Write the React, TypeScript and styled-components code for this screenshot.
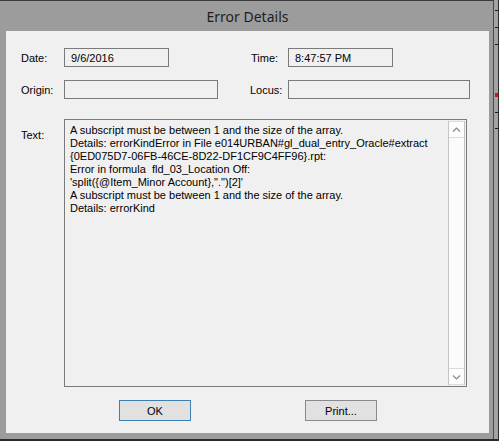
import React from "react";
import styled, { createGlobalStyle } from "styled-components";

const Global = createGlobalStyle`
  html, body { margin: 0; padding: 0; background: #2b2b2b; }
  body { font-family: "Liberation Sans", Arial, sans-serif; }
`;

const Desktop = styled.div`
  width: 499px;
  height: 441px;
  display: flex;
  background: #2b2b2b;
  overflow: hidden;
`;

const Window = styled.div`
  width: 494px;
  height: 439px;
  box-sizing: border-box;
  border-top: 1px solid #3a3a3a;
  border-right: 1px solid #4a4a4a;
  background: #9c9c9c;
  padding: 0 4px 6px 6px;
  display: flex;
  flex-direction: column;
`;

const SideStrip = styled.div`
  width: 4px;
  height: 439px;
  background: #a3a3a3;
  position: relative;
`;

const Tick = styled.div<{ $top: number; $red?: boolean }>`
  position: absolute;
  right: 0;
  top: ${(p) => p.$top}px;
  width: 3px;
  height: ${(p) => (p.$red ? 4 : 1)}px;
  background: ${(p) => (p.$red ? "#e01010" : "#1a1a1a")};
`;

const TitleBar = styled.div`
  height: 30px;
  display: flex;
  align-items: center;
  justify-content: center;
  font-family: "Noto Sans", "Open Sans", sans-serif;
  font-size: 14px;
  color: #1e1e1e;
  padding-top: 1px;
  box-sizing: border-box;
`;

const Client = styled.div`
  flex: 1;
  background: #f0f0f0;
  padding: 17px 0 0 15px;
  display: flex;
  flex-direction: column;
  font-size: 11px;
  color: #000;
`;

const FieldRow = styled.div<{ $gap?: number }>`
  display: flex;
  align-items: center;
  height: 19px;
  margin-top: ${(p) => p.$gap ?? 0}px;
`;

const Label = styled.span<{ $w: number; $ml?: number }>`
  width: ${(p) => p.$w}px;
  margin-left: ${(p) => p.$ml ?? 0}px;
  flex: none;
`;

const Field = styled.div<{ $w: number }>`
  width: ${(p) => p.$w}px;
  height: 19px;
  box-sizing: border-box;
  border: 1px solid #7a7a7a;
  padding: 0 6px;
  display: flex;
  align-items: center;
  flex: none;
`;

const TextRow = styled.div`
  display: flex;
  margin-top: 20px;
`;

const TextLabel = styled.span`
  width: 43px;
  padding-top: 10px;
  flex: none;
`;

const TextArea = styled.div`
  width: 403px;
  height: 268px;
  box-sizing: border-box;
  border: 1px solid #7a7a7a;
  display: flex;
`;

const TextContent = styled.div`
  flex: 1;
  padding: 4px 0 0 5px;
  line-height: 13px;
  white-space: pre;
  overflow: hidden;
`;

const ScrollBar = styled.div`
  width: 17px;
  margin: 1px 1px 1px 0;
  background: #fbfbfb;
  border-left: 1px solid #c4c4c4;
  border-right: 1px solid #c4c4c4;
  display: flex;
  flex-direction: column;
  justify-content: space-between;
  box-sizing: border-box;
`;

const ArrowBtn = styled.div`
  height: 17px;
  box-sizing: border-box;
  border-top: 1px solid #dcdcdc;
  border-bottom: 1px solid #dcdcdc;
  display: flex;
  align-items: center;
  justify-content: center;
  background: #fdfdfd;
`;

const ButtonRow = styled.div`
  display: flex;
  margin-top: 13px;
  padding-left: 98px;
  gap: 114px;
`;

const Button = styled.div<{ $default?: boolean }>`
  width: 72px;
  height: 21px;
  box-sizing: border-box;
  border: 1px solid ${(p) => (p.$default ? "#3c7fb1" : "#8a8a8a")};
  background: #e1e1e1;
  display: flex;
  align-items: center;
  justify-content: center;
`;

const Chevron = ({ down }: { down?: boolean }) => (
  <svg width="9" height="6" viewBox="0 0 9 6">
    <path
      d={down ? "M1 1.5 L4.5 5 L8 1.5" : "M1 4.5 L4.5 1 L8 4.5"}
      fill="none"
      stroke="#8a8a8a"
      strokeWidth="1.2"
    />
  </svg>
);

const lines = [
  "A subscript must be between 1 and the size of the array.",
  "Details: errorKindError in File e014URBAN#gl_dual_entry_Oracle#extract",
  "{0ED075D7-06FB-46CE-8D22-DF1CF9C4FF96}.rpt:",
  "Error in formula  fld_03_Location Off:",
  "'split({@Item_Minor Account},\".\")[2]'",
  "A subscript must be between 1 and the size of the array.",
  "Details: errorKind",
];

export default function App() {
  return (
    <>
      <Global />
      <Desktop>
        <Window>
          <TitleBar>Error Details</TitleBar>
          <Client>
            <FieldRow>
              <Label $w={43}>Date:</Label>
              <Field $w={105}>9/6/2016</Field>
              <Label $w={37} $ml={82}>Time:</Label>
              <Field $w={105}>8:47:57 PM</Field>
            </FieldRow>
            <FieldRow $gap={13}>
              <Label $w={43}>Origin:</Label>
              <Field $w={154} />
              <Label $w={38} $ml={32}>Locus:</Label>
              <Field $w={182} />
            </FieldRow>
            <TextRow>
              <TextLabel>Text:</TextLabel>
              <TextArea>
                <TextContent>{lines.join("\n")}</TextContent>
                <ScrollBar>
                  <ArrowBtn>
                    <Chevron />
                  </ArrowBtn>
                  <ArrowBtn>
                    <Chevron down />
                  </ArrowBtn>
                </ScrollBar>
              </TextArea>
            </TextRow>
            <ButtonRow>
              <Button $default>OK</Button>
              <Button>Print...</Button>
            </ButtonRow>
          </Client>
        </Window>
        <SideStrip>
          <Tick $top={10} />
          <Tick $top={27} />
          <Tick $top={44} />
          <Tick $top={93} $red />
          <Tick $top={112} />
          <Tick $top={128} />
        </SideStrip>
      </Desktop>
    </>
  );
}
